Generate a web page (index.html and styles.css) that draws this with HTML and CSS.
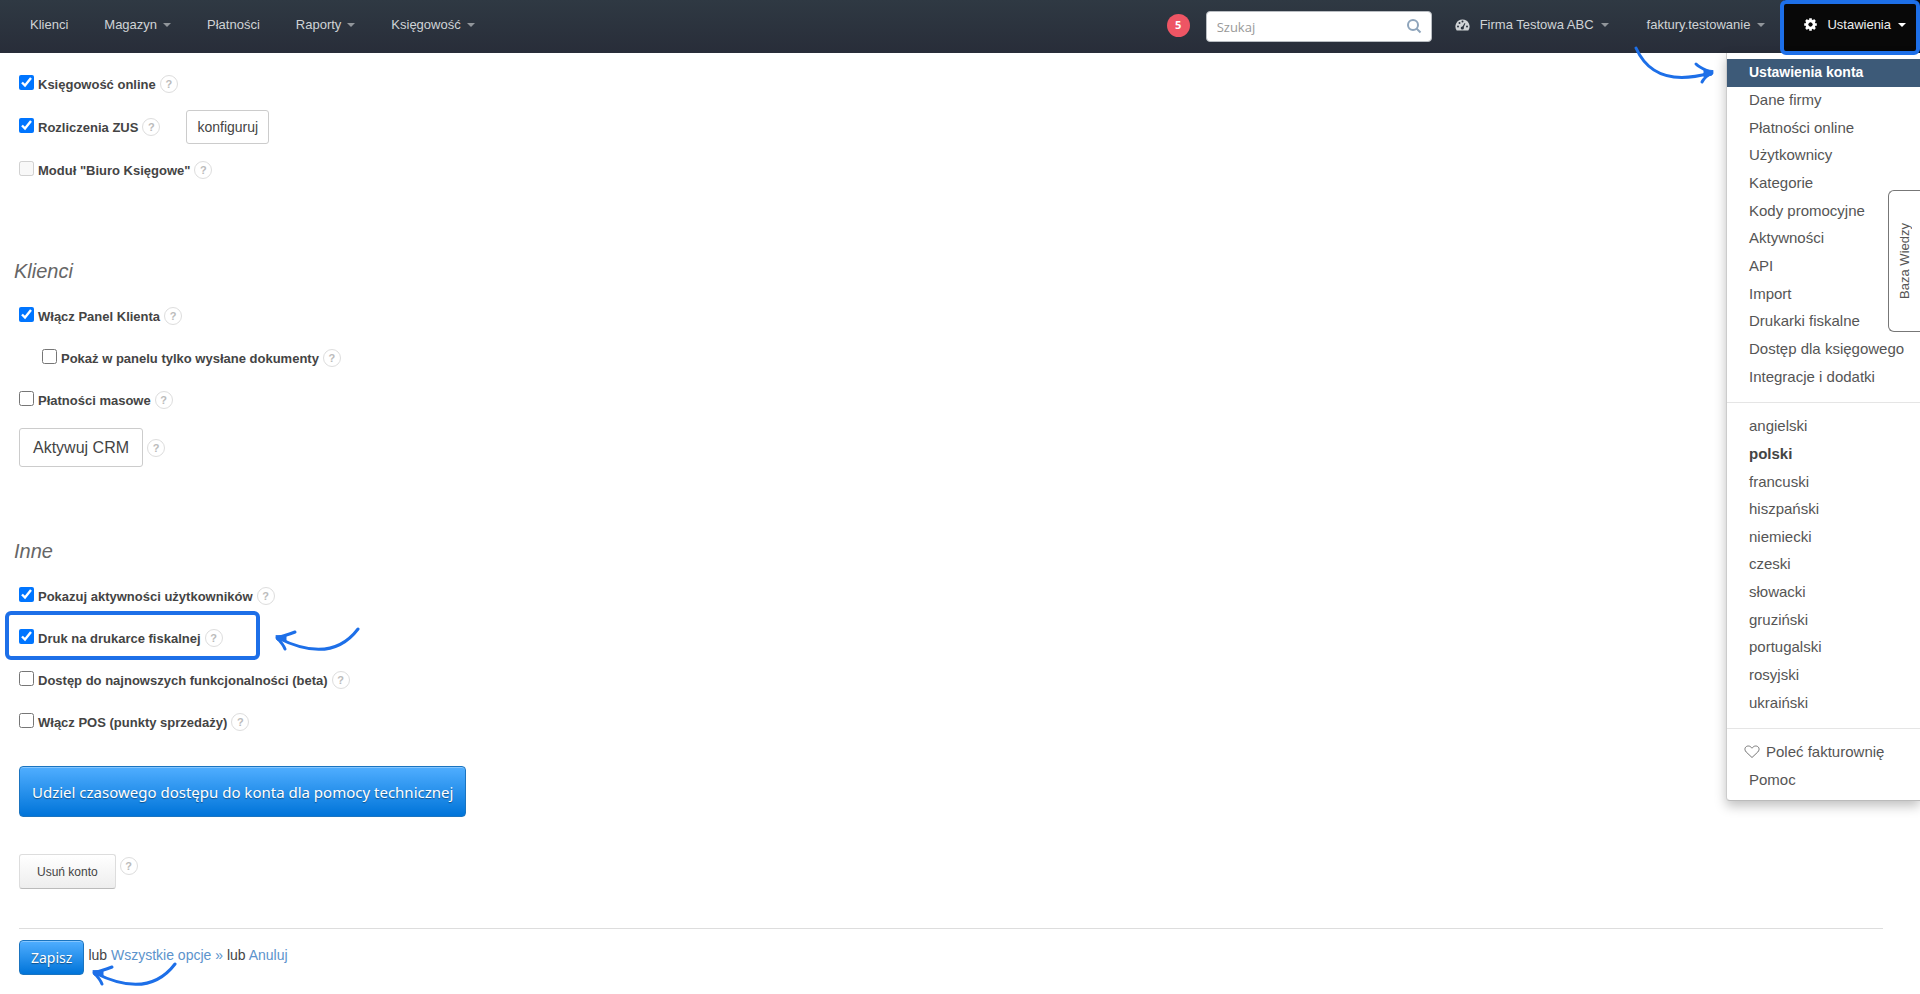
FILE: index.html
```html
<!DOCTYPE html>
<html lang="pl">

<head>
    <meta charset="UTF-8" />
    <meta name="viewport" content="width=device-width, initial-scale=1.0" />
    <title>Ustawienia konta</title>

    <link rel="stylesheet" href="styles.css">
</head>

<body>
    <svg width="0" height="0" class="symbols" aria-hidden="true">
        <symbol id="arrow-left" viewBox="0 0 86 28">
            <path d="M84 3 C65 28 38 29 4 12" />
            <path d="M21 6 C14 9 8 10 3 12 C6 15 9 18 11 23" />
            <path d="M2 10 L3 14 L12 15 L12 10 Z" fill="#1d6fe8" stroke-width="1" />
        </symbol>
        <symbol id="arrow-right" viewBox="0 0 82 40">
            <path d="M2 2 C15 31 41 37 76 27" />
            <path d="M62 18 C67 23 73 24 78 27 C74 29 70 32 68 36" />
            <path d="M79 25 L78 29 L70 31 L70 24 Z" fill="#1d6fe8" stroke-width="1" />
        </symbol>
    </svg>

    <header class="navbar">
        <nav class="nav">
            <a href="#">Klienci</a>
            <a href="#" class="has-caret">Magazyn</a>
            <a href="#">Płatności</a>
            <a href="#" class="has-caret">Raporty</a>
            <a href="#" class="has-caret">Księgowość</a>
        </nav>

        <div class="nav-right">
            <span class="badge">5</span>
            <form class="search">
                <input type="search" placeholder="Szukaj" aria-label="Szukaj">
                <button type="button" aria-label="Szukaj">
                    <svg width="16" height="16" viewBox="0 0 16 16">
                        <circle cx="7" cy="7" r="5" />
                        <path d="M10.5 10.5 L14.5 14.5" />
                    </svg>
                </button>
            </form>
            <a href="#" class="has-caret">
                <svg class="gauge" width="15" height="12" viewBox="0 0 15 12">
                    <path fill="#d0d3d6" d="M7.500 0.500 A7 7 0 0 0 1.700 11.500 H13.300 A7 7 0 0 0 7.500 0.500 Z" />
                    <g fill="#2b333e">
                        <circle cx="3" cy="7.500" r="1" />
                        <circle cx="4.500" cy="4" r="1" />
                        <circle cx="7.500" cy="2.600" r="1" />
                        <circle cx="12" cy="7.500" r="1" />
                        <circle cx="7.300" cy="9" r="1.600" />
                        <path d="M6.800 8.800 L9.600 4 L10.400 4.400 L8.200 9.200 Z" />
                    </g>
                </svg>
                Firma Testowa ABC
            </a>
            <a href="#" class="has-caret">faktury.testowanie</a>
            <div class="settings">
                <a href="#" class="has-caret">
                    <svg class="gear" width="13" height="13" viewBox="0 0 13 13">
                        <circle cx="6.500" cy="6.500" r="3.500" fill="none" stroke="#fff" stroke-width="3" />
                        <path stroke="#fff" stroke-width="2.600" d="M6.500 .2v2M6.500 10.800v2M.2 6.500h2M10.800 6.500h2M2 2l1.500 1.500M9.500 9.500l1.500 1.500M11 2L9.500 3.500M3.500 9.500L2 11" />
                        <circle cx="6.500" cy="6.500" r="2" fill="#080808" />
                    </svg>
                    Ustawienia
                </a>

                <div class="dropdown">
                    <ul class="menu-main">
                        <li class="active"><a href="#">Ustawienia konta</a></li>
                        <li><a href="#">Dane firmy</a></li>
                        <li><a href="#">Płatności online</a></li>
                        <li><a href="#">Użytkownicy</a></li>
                        <li><a href="#">Kategorie</a></li>
                        <li><a href="#">Kody promocyjne</a></li>
                        <li><a href="#">Aktywności</a></li>
                        <li><a href="#">API</a></li>
                        <li><a href="#">Import</a></li>
                        <li><a href="#">Drukarki fiskalne</a></li>
                        <li><a href="#">Dostęp dla księgowego</a></li>
                        <li><a href="#">Integracje i dodatki</a></li>
                    </ul>
                    <ul class="menu-lang">
                        <li><a href="#">angielski</a></li>
                        <li class="current"><a href="#">polski</a></li>
                        <li><a href="#">francuski</a></li>
                        <li><a href="#">hiszpański</a></li>
                        <li><a href="#">niemiecki</a></li>
                        <li><a href="#">czeski</a></li>
                        <li><a href="#">słowacki</a></li>
                        <li><a href="#">gruziński</a></li>
                        <li><a href="#">portugalski</a></li>
                        <li><a href="#">rosyjski</a></li>
                        <li><a href="#">ukraiński</a></li>
                    </ul>
                    <ul class="menu-help">
                        <li class="with-icon">
                            <a href="#">
                                <svg width="16" height="14" viewBox="0 0 16 14">
                                    <path d="M8 12.500 L2.200 7 C-.5 4 1.500 1 4.300 1 C6 1 7 2 8 3.200 C9 2 10 1 11.700 1 C14.500 1 16.500 4 13.800 7 Z" />
                                </svg>
                                Poleć fakturownię
                            </a>
                        </li>
                        <li><a href="#">Pomoc</a></li>
                    </ul>
                </div>

                <svg class="arrow arrow-menu" width="82" height="40"><use href="#arrow-right" /></svg>
            </div>
        </div>
    </header>

    <a href="#" class="knowledge"><span>Baza Wiedzy</span></a>

    <main>
        <form>
            <section class="modules">
                <div class="field">
                    <input type="checkbox" id="accounting" checked>
                    <label for="accounting">Księgowość online</label>
                    <span class="help">?</span>
                </div>
                <div class="field">
                    <input type="checkbox" id="zus" checked>
                    <label for="zus">Rozliczenia ZUS</label>
                    <span class="help">?</span>
                    <button type="button" class="btn btn-small">konfiguruj</button>
                </div>
                <div class="field">
                    <input type="checkbox" id="office" disabled>
                    <label for="office">Moduł "Biuro Księgowe"</label>
                    <span class="help">?</span>
                </div>
            </section>

            <section>
                <h2>Klienci</h2>
                <div class="field">
                    <input type="checkbox" id="panel" checked>
                    <label for="panel">Włącz Panel Klienta</label>
                    <span class="help">?</span>
                </div>
                <div class="field nested">
                    <input type="checkbox" id="panel-sent">
                    <label for="panel-sent">Pokaż w panelu tylko wysłane dokumenty</label>
                    <span class="help">?</span>
                </div>
                <div class="field">
                    <input type="checkbox" id="mass">
                    <label for="mass">Płatności masowe</label>
                    <span class="help">?</span>
                </div>
                <div class="crm">
                    <button type="button" class="btn btn-large">Aktywuj CRM</button>
                    <span class="help">?</span>
                </div>
            </section>

            <section>
                <h2>Inne</h2>
                <div class="field">
                    <input type="checkbox" id="activity" checked>
                    <label for="activity">Pokazuj aktywności użytkowników</label>
                    <span class="help">?</span>
                </div>
                <div class="field marked">
                    <input type="checkbox" id="fiscal" checked>
                    <label for="fiscal">Druk na drukarce fiskalnej</label>
                    <span class="help">?</span>
                    <svg class="arrow arrow-fiscal" width="86" height="28"><use href="#arrow-left" /></svg>
                </div>
                <div class="field">
                    <input type="checkbox" id="beta">
                    <label for="beta">Dostęp do najnowszych funkcjonalności (beta)</label>
                    <span class="help">?</span>
                </div>
                <div class="field">
                    <input type="checkbox" id="pos">
                    <label for="pos">Włącz POS (punkty sprzedaży)</label>
                    <span class="help">?</span>
                </div>
            </section>

            <button type="button" class="btn-primary btn-access">Udziel czasowego dostępu do konta dla pomocy technicznej</button>

            <div class="remove">
                <button type="button" class="btn btn-remove">Usuń konto</button>
                <span class="help">?</span>
            </div>

            <footer>
                <button type="submit" class="btn-primary btn-save">Zapisz</button>
                <p>lub <a href="#">Wszystkie opcje »</a> lub <a href="#">Anuluj</a></p>
                <svg class="arrow arrow-save" width="86" height="28"><use href="#arrow-left" /></svg>
            </footer>
        </form>
    </main>
</body>

</html>
```
FILE: styles.css
```css
*,
*::before,
*::after {
    box-sizing: border-box;
}

body {
    margin: 0;
    font-family: "Liberation Sans", Arial, sans-serif;
    font-size: 14px;
    color: #444;
    background: white;
}

a {
    text-decoration: none;
}

button {
    font-family: inherit;
    cursor: pointer;
}

.symbols {
    position: absolute;
}

/* top bar */

.navbar {
    display: flex;
    justify-content: space-between;
    height: 53px;
    padding-left: 12px;
    background: linear-gradient(#2f3943, #282d39);
}

.nav,
.nav-right {
    display: flex;
}

.nav a,
.nav-right > a,
.settings > a {
    display: flex;
    align-items: center;
    height: 53px;
    padding: 0 18px 4px;
    font-size: 13px;
    color: #d0d3d6;
    white-space: nowrap;
}

.nav-right > a {
    padding: 0 19px 4px;
}

.has-caret::after {
    content: "";
    margin-left: 6px;
    border-top: 4px solid #91969b;
    border-left: 4px solid transparent;
    border-right: 4px solid transparent;
}

.nav-right .has-caret::after {
    margin-left: 7px;
}

.badge {
    width: 23px;
    height: 23px;
    margin: 14px 16px 0 0;
    border-radius: 50%;
    background: #ee5564;
    color: white;
    font: bold 11px/22px "Open Sans", sans-serif;
    text-align: center;
}

.search {
    position: relative;
    width: 226px;
    height: 31px;
    margin: 11px 4px 0 0;
}

.search input {
    width: 100%;
    height: 100%;
    padding: 0 40px 0 10px;
    border: 1px solid #b9bdc2;
    border-radius: 4px;
    font: 13px "Open Sans", sans-serif;
}

.search input::placeholder {
    color: #999;
}

.search button {
    position: absolute;
    top: 7px;
    right: 10px;
    padding: 0;
    border: 0;
    background: none;
    line-height: 0;
}

.search svg {
    fill: none;
    stroke: #8ea4bb;
    stroke-width: 2;
}

.gauge {
    margin-right: 10px;
}

.settings {
    position: relative;
}

.settings > a {
    padding: 0 14px 4px 20px;
    background: #080808;
    color: #eee;
}

.settings > a::after {
    border-top-color: white;
}

.settings > a::before {
    content: "";
    position: absolute;
    z-index: 2;
    inset: 0 0 -2px -4px;
    border: 4px solid #1d6fe8;
    border-radius: 6px;
}

.gear {
    margin-right: 10px;
}

/* settings menu */

.dropdown {
    position: absolute;
    top: 53px;
    right: 0;
    width: 194px;
    padding: 6px 0;
    border-left: 1px solid #ccc;
    border-bottom: 1px solid #bbb;
    border-radius: 0 0 0 4px;
    background: white;
    box-shadow: 0 5px 12px rgba(0, 0, 0, 0.25);
}

.dropdown ul {
    display: grid;
    grid-auto-rows: 1fr;
    margin: 0;
    padding: 0;
    list-style: none;
}

.dropdown ul + ul {
    margin-top: 11px;
    padding-top: 10px;
    border-top: 1px solid #e5e5e5;
}

.menu-main {
    min-height: 332px;
}

.menu-lang {
    min-height: 315px;
}

.menu-help {
    min-height: 66px;
}

.dropdown a {
    display: flex;
    align-items: center;
    height: 100%;
    padding: 0 0 2px 22px;
    font-size: 15px;
    color: #555;
    white-space: nowrap;
}

.dropdown .active a {
    background: #3d5a78;
    color: white;
    font-size: 14px;
    font-weight: bold;
}

.dropdown .current a {
    color: #444;
    font-weight: bold;
}

.dropdown .with-icon a {
    padding-left: 17px;
}

.with-icon svg {
    margin-right: 6px;
    fill: none;
    stroke: #777;
}

.knowledge {
    position: fixed;
    top: 190px;
    right: 0;
    display: flex;
    align-items: center;
    justify-content: center;
    width: 32px;
    height: 142px;
    border: 1px solid #777;
    border-right: 0;
    border-radius: 6px 0 0 6px;
    background: white;
    color: #555;
    font-size: 13px;
}

.knowledge span {
    writing-mode: vertical-rl;
    transform: rotate(180deg);
}

/* settings form */

main {
    padding: 10px 37px 20px 19px;
}

h2 {
    margin: 68px 0 12px -5px;
    font-size: 20px;
    font-weight: normal;
    font-style: italic;
    line-height: 24px;
    color: #666;
}

.modules {
    display: grid;
    row-gap: 1px;
}

.field {
    display: flex;
    align-items: center;
    height: 42px;
}

.nested {
    padding-left: 23px;
}

.field input {
    width: 15px;
    height: 15px;
    margin: 0 4px 4px 0;
}

.field label {
    font-size: 13px;
    font-weight: bold;
}

.help {
    width: 18px;
    height: 18px;
    margin-left: 4px;
    border: 1px solid #ddd;
    border-radius: 50%;
    color: #bbb;
    font-size: 11px;
    font-weight: bold;
    line-height: 16px;
    text-align: center;
}

.btn {
    border: 1px solid #ccc;
    border-radius: 3px;
    background: white;
    color: #444;
}

.btn-small {
    height: 34px;
    margin-left: 26px;
    padding: 0 10px;
    font-size: 14px;
}

.btn-large {
    height: 39px;
    padding: 0 13px;
    font-size: 16px;
}

.crm {
    display: flex;
    align-items: center;
    padding: 7px 0 4px;
}

.marked {
    position: relative;
}

.marked::before {
    content: "";
    position: absolute;
    top: -6px;
    left: -14px;
    width: 255px;
    height: 49px;
    border: 4px solid #1d6fe8;
    border-radius: 6px;
    pointer-events: none;
}

.btn-primary {
    border: 1px solid #1a74c0;
    border-radius: 4px;
    background: linear-gradient(#50aeff, #0074d9);
    box-shadow: inset 0 1px 0 rgba(255, 255, 255, 0.3);
    color: white;
    font-family: "Noto Sans", sans-serif;
    text-shadow: 0 1px 1px rgba(0, 0, 0, 0.4);
}

.btn-access {
    display: block;
    height: 51px;
    margin-top: 23px;
    padding: 0 12px;
    font-size: 15px;
}

.remove {
    display: flex;
    margin: 37px 0 39px;
}

.remove .help {
    margin-top: 3px;
}

.btn-remove {
    height: 35px;
    padding: 0 17px;
    border-color: #ddd #ddd #bbb;
    background: linear-gradient(#fff, #eee);
    font-size: 12px;
}

footer {
    position: relative;
    display: flex;
    padding-top: 11px;
    border-top: 1px solid #ddd;
}

footer p {
    margin: 7px 0 0 4px;
}

footer a {
    color: #5c93cc;
}

.btn-save {
    height: 35px;
    padding: 0 11px;
    font-size: 14px;
}

/* arrows pointing at the options */

.arrow {
    position: absolute;
    fill: none;
    stroke: #1d6fe8;
    stroke-width: 3;
    stroke-linecap: round;
    stroke-linejoin: round;
    pointer-events: none;
}

.arrow-menu {
    top: 46px;
    right: 204px;
}

.arrow-fiscal {
    top: 9px;
    left: 255px;
}

.arrow-save {
    top: 32px;
    left: 72px;
}
```
